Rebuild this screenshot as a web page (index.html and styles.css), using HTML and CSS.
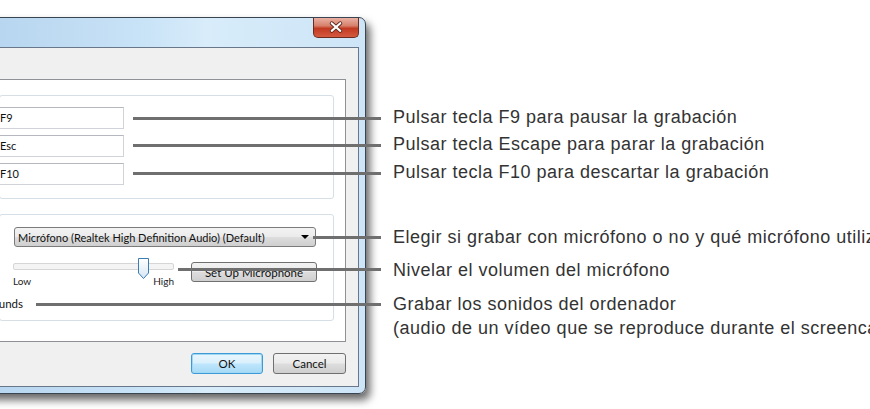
FILE: index.html
```html
<!DOCTYPE html>
<html lang="es">
<head>
    <meta charset="UTF-8">
    <title>Opciones de grabación</title>
    <link rel="stylesheet" href="styles.css">
</head>
<body>
    <div class="stage">
        <div class="window">
            <div class="titlebar">
                <button class="close" aria-label="Cerrar">
                    <svg width="46" height="19" viewBox="0 0 46 19">
                        <path d="M18.5 5 L27.5 13 M27.5 5 L18.5 13" stroke="#5a2418" stroke-width="4" stroke-linecap="round"/>
                        <path d="M18.5 5 L27.5 13 M27.5 5 L18.5 13" stroke="#ffffff" stroke-width="2.2" stroke-linecap="round"/>
                    </svg>
                </button>
            </div>
            <div class="client">
                <div class="panel">
                    <div class="group keys">
                        <div class="field">F9</div>
                        <div class="field">Esc</div>
                        <div class="field">F10</div>
                    </div>
                    <div class="group audio">
                        <div class="select">
                            <span>Micrófono (Realtek High Definition Audio) (Default)</span>
                            <span class="arrow"></span>
                        </div>
                        <div class="mic-row">
                            <div class="slider">
                                <div class="track"></div>
                                <svg class="thumb" width="12" height="22" viewBox="0 0 12 22">
                                    <defs>
                                        <linearGradient id="tg" x1="0" y1="0" x2="0" y2="1">
                                            <stop offset="0" stop-color="#ffffff"/>
                                            <stop offset="1" stop-color="#d6e6f4"/>
                                        </linearGradient>
                                    </defs>
                                    <path d="M0.5 0.5 H10.5 V15 L5.5 20.5 L0.5 15 Z" fill="url(#tg)" stroke="#3b7cb4"/>
                                </svg>
                                <div class="scale">
                                    <span>Low</span>
                                    <span>High</span>
                                </div>
                            </div>
                            <button class="btn setup">Set Up Microphone</button>
                        </div>
                        <div class="sounds">Record Sounds</div>
                    </div>
                </div>
                <div class="actions">
                    <button class="btn default">OK</button>
                    <button class="btn">Cancel</button>
                </div>
            </div>
        </div>

        <div class="notes">
            <p class="n1">Pulsar tecla F9 para pausar la grabación</p>
            <p class="n2">Pulsar tecla Escape para parar la grabación</p>
            <p class="n3">Pulsar tecla F10 para descartar la grabación</p>
            <p class="n4">Elegir si grabar con micrófono o no y qué micrófono utilizar</p>
            <p class="n5">Nivelar el volumen del micrófono</p>
            <p class="n6">Grabar los sonidos del ordenador<br>(audio de un vídeo que se reproduce durante el screencast)</p>
        </div>

        <!-- lineas de las anotaciones -->
        <div class="leader l1"></div>
        <div class="leader l2"></div>
        <div class="leader l3"></div>
        <div class="leader l4"></div>
        <div class="leader l5"></div>
        <div class="leader l6"></div>
    </div>
</body>
</html>
```

FILE: styles.css
```css
/* pagina */
body {
    margin: 0;
    background: #ffffff;
    overflow: hidden;
    font-family: "Lato", "Liberation Sans", sans-serif;
}

.stage {
    position: relative;
    display: flex;
    width: 870px;
    height: 409px;
    overflow: hidden;
}

/* ventana */
.window {
    flex: none;
    display: flex;
    flex-direction: column;
    box-sizing: border-box;
    width: 400px;
    height: 377px;
    margin: 17px 0 0 -34px;
    padding: 0 6px 6px 6px;
    border: 1px solid #3a4552;
    border-radius: 7px;
    background: linear-gradient(to right, #b4d3ee 0%, #c9e3f7 45%, #d8ecfa 60%, #cde5f7 100%);
    box-shadow: 4px 6px 8px rgba(0, 0, 0, 0.6);
}

.titlebar {
    height: 29px;
    display: flex;
    justify-content: flex-end;
}

.close {
    width: 46px;
    height: 20px;
    padding: 0;
    border: 1px solid #6b2b1f;
    border-top: none;
    border-radius: 0 0 5px 5px;
    background: linear-gradient(to bottom, #eab0a2 0%, #d7826d 40%, #c23a22 55%, #d45a3f 100%);
    display: flex;
    align-items: center;
    justify-content: center;
}

.close svg {
    display: block;
}

.client {
    flex: 1;
    display: flex;
    flex-direction: column;
    border: 1px solid #68788a;
    background: #f0f0f0;
}

.panel {
    height: 261px;
    margin: 31px 12px 0 13px;
    border: 1px solid #8e9196;
    background: #ffffff;
    padding: 0 11px;
}

.group {
    border: 1px solid #d5dfe5;
    border-radius: 3px;
}

.keys {
    box-sizing: border-box;
    height: 104px;
    margin-top: 15px;
    padding-top: 11px;
    display: flex;
    flex-direction: column;
    gap: 6px;
}

.field {
    box-sizing: border-box;
    width: 129px;
    height: 22px;
    margin-left: -5px;
    padding-left: 4px;
    border: 1px solid #d0d4da;
    border-top-color: #b5b9bf;
    font-size: 11px;
    line-height: 20px;
    color: #111;
}

.audio {
    box-sizing: border-box;
    height: 107px;
    margin-top: 15px;
    padding-top: 12px;
}

.select {
    box-sizing: border-box;
    width: 302px;
    height: 20px;
    margin-left: 14px;
    padding: 0 6px 0 3px;
    border: 1px solid #7b7b7b;
    border-radius: 3px;
    background: linear-gradient(to bottom, #f3f3f3 0%, #ebebeb 48%, #dddddd 52%, #cfcfcf 100%);
    display: flex;
    justify-content: space-between;
    align-items: center;
    font-size: 11px;
    color: #111;
}

.arrow {
    width: 0;
    height: 0;
    border-left: 4px solid transparent;
    border-right: 4px solid transparent;
    border-top: 4px solid #000;
}

.mic-row {
    display: flex;
    margin-top: 11px;
}

.slider {
    position: relative;
    width: 161px;
    margin-left: 13px;
}

.track {
    box-sizing: border-box;
    height: 7px;
    margin-top: 5px;
    border: 1px solid #d6d6d6;
    border-radius: 2px;
    background: #f4f4f4;
}

.thumb {
    position: absolute;
    left: 125px;
    top: 0;
}

.scale {
    display: flex;
    justify-content: space-between;
    margin-top: 5px;
    font-size: 10px;
    line-height: 13px;
    color: #222;
}

.btn {
    box-sizing: border-box;
    height: 21px;
    padding: 0;
    border: 1px solid #707070;
    border-radius: 3px;
    background: linear-gradient(to bottom, #f2f2f2 0%, #ebebeb 48%, #dddddd 52%, #cfcfcf 100%);
    font-family: "Lato", "Liberation Sans", sans-serif;
    font-size: 11.5px;
    color: #111;
}

.setup {
    width: 126px;
    height: 20px;
    margin: 4px 0 0 17px;
}

.sounds {
    width: 129px;
    margin: 8px 0 0 -106px;
    text-align: right;
    white-space: nowrap;
    font-size: 11.5px;
    line-height: 16px;
    color: #111;
}

.actions {
    display: flex;
    justify-content: flex-end;
    gap: 10px;
    margin: 11px 12px 0 0;
}

.actions .btn {
    width: 73px;
}

.actions .default {
    width: 72px;
    border-color: #3c9bd6;
    box-shadow: inset 0 0 0 1px #9fd8f4;
    background: linear-gradient(to bottom, #eaf6fd 0%, #d9f0fc 48%, #bee6fd 52%, #a7d9f5 100%);
}

/* anotaciones */
.notes {
    margin-left: 27px;
    font-family: "Liberation Sans", Arial, sans-serif;
    font-size: 18px;
    letter-spacing: 0.5px;
    color: #333333;
    white-space: nowrap;
}

.notes p {
    margin: 0;
    line-height: 20px;
}

.n1 { margin-top: 107px !important; }
.n2 { margin-top: 7px !important; }
.n3 { margin-top: 8px !important; }
.n4 { margin-top: 45px !important; }
.n5 { margin-top: 13px !important; }
.n6 { margin-top: 12px !important; line-height: 24px !important; }

.leader {
    position: absolute;
    right: 489px;
    height: 3px;
    background: #6f6f6f;
}

.l1 { top: 117px; left: 133px; }
.l2 { top: 144px; left: 133px; }
.l3 { top: 172px; left: 133px; }
.l4 { top: 236px; left: 313px; }
.l5 { top: 268px; left: 178px; }
.l6 { top: 303px; left: 36px; }
```
